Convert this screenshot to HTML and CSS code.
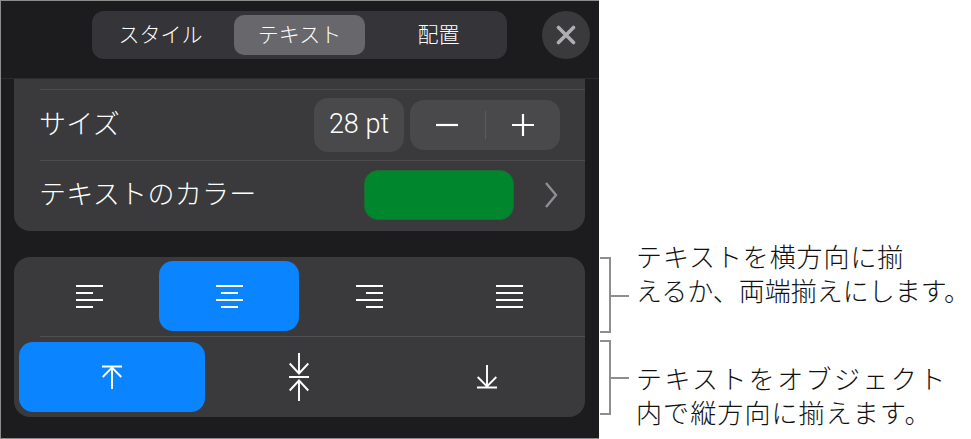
FILE: index.html
```html
<!DOCTYPE html>
<html lang="ja">
<head>
  <meta charset="UTF-8">
  <title>テキストの配置</title>
  <link rel="stylesheet" href="styles.css">
</head>
<body>

  <div class="panel">
    <div class="header">
      <div class="tabs">
        <div class="tab tab-style">スタイル</div>
        <div class="tab tab-active">テキスト</div>
        <div class="tab tab-layout">配置</div>
      </div>
      <div class="close">
        <svg width="20" height="20" viewBox="0 0 20 20"><path d="M2.500 2.500 17.500 17.500M17.500 2.500 2.500 17.500" stroke="#aeaeb2" stroke-width="3.600" stroke-linecap="round"/></svg>
      </div>
    </div>

    <div class="card card-top">
      <div class="row row-size">
        <span class="label">サイズ</span>
        <div class="value">28 pt</div>
        <div class="stepper">
          <div class="step step-minus"><svg width="22" height="4" viewBox="0 0 22 4"><path d="M0 2H22" stroke="#fff" stroke-width="2.200"/></svg></div>
          <div class="step"><svg width="22" height="22" viewBox="0 0 22 22"><path d="M0 11H22M11 0V22" stroke="#fff" stroke-width="2.200"/></svg></div>
        </div>
      </div>
      <div class="row row-color">
        <span class="label">テキストのカラー</span>
        <div class="swatch"></div>
        <svg class="chevron" width="14" height="28" viewBox="0 0 14 28"><path d="M2 2 12 14 2 26" fill="none" stroke="#8e8e93" stroke-width="2.400"/></svg>
      </div>
    </div>

    <div class="card card-align">
      <div class="align-row">
        <div class="align-btn">
          <svg width="27" height="24" viewBox="0 0 27 24"><path d="M0 2H27M0 9H17M0 16H27M0 23H17" stroke="#fff" stroke-width="1.800"/></svg>
        </div>
        <div class="align-btn is-on">
          <svg width="27" height="24" viewBox="0 0 27 24"><path d="M0 2H27M5 9H22M0 16H27M5 23H22" stroke="#fff" stroke-width="1.800"/></svg>
        </div>
        <div class="align-btn">
          <svg width="27" height="24" viewBox="0 0 27 24"><path d="M0 2H27M10 9H27M0 16H27M10 23H27" stroke="#fff" stroke-width="1.800"/></svg>
        </div>
        <div class="align-btn">
          <svg width="27" height="24" viewBox="0 0 27 24"><path d="M0 2H27M0 9H27M0 16H27M0 23H27" stroke="#fff" stroke-width="1.800"/></svg>
        </div>
      </div>
      <div class="valign-row">
        <div class="valign-btn is-on">
          <svg width="20" height="24" viewBox="0 0 20 24"><path d="M0 1.500H20M10 2V24M0.700 12 10 2.500 19.300 12" fill="none" stroke="#fff" stroke-width="1.900"/></svg>
        </div>
        <div class="valign-btn">
          <svg width="20" height="48" viewBox="0 0 20 48"><path d="M0 24H20M10 0V21M0.700 10.500 10 20.500 19.300 10.500M10 48V27M0.700 37.500 10 27.500 19.300 37.500" fill="none" stroke="#fff" stroke-width="1.900"/></svg>
        </div>
        <div class="valign-btn">
          <svg width="20" height="24" viewBox="0 0 20 24"><path d="M0 22.500H20M10 0V22M0.700 12 10 21.500 19.300 12" fill="none" stroke="#fff" stroke-width="1.900"/></svg>
        </div>
      </div>
    </div>
  </div>

  <div class="notes">
    <div class="note note-first">
      <div class="bracket"></div>
      <p><span class="line-a">テキストを横方向に揃</span><br><span class="line-b">えるか、両端揃えにします。</span></p>
    </div>
    <div class="note note-second">
      <div class="bracket"></div>
      <p><span class="line-c">テキストをオブジェクト</span><br><span class="line-d">内で縦方向に揃えます。</span></p>
    </div>
  </div>

</body>
</html>
```

FILE: styles.css
```css
* {
  margin: 0;
  padding: 0;
  box-sizing: border-box;
  font-family: "Noto Sans CJK JP", "Noto Sans", sans-serif;
  font-weight: 300;
}

body {
  background: white;
  width: 971px;
  height: 439px;
  overflow: hidden;
  display: flex;
}

.panel {
  width: 599px;
  height: 439px;
  background: #1c1c1e;
  border: 1px solid #8c8c8c;
  border-right: none;
  padding: 0 14px 0 13px;
  display: flex;
  flex-direction: column;
}

.header {
  height: 78px;
  margin: 0 -14px 0 -13px;
  padding: 10px 8px 0 91px;
  border-bottom: 1px solid #2c2c2e;
  display: flex;
  gap: 35px;
}

.tabs {
  width: 415px;
  height: 48px;
  background: #343439;
  border-radius: 12px;
  padding: 4px 0 4px 142px;
  display: flex;
  align-items: center;
  position: relative;
}

.tab {
  color: white;
  font-size: 21px;
  height: 40px;
  line-height: 36px;
  text-align: center;
  flex-shrink: 0;
}

.tab-style {
  position: absolute;
  left: 0;
  width: 137px;
}

.tab-active {
  width: 131px;
  background: #67676c;
  border-radius: 10px;
}

.tab-layout {
  width: 142px;
  padding-left: 5px;
}

.close {
  width: 48px;
  height: 48px;
  border-radius: 50%;
  background: #3a3a3c;
  display: flex;
  align-items: center;
  justify-content: center;
}

.card {
  background: #3a3a3c;
  border-radius: 0 0 16px 16px;
}

.card-top {
  height: 152px;
  padding: 10px 0 0 26px;
}

.row {
  border-top: 1.500px solid #4c4c4e;
  display: flex;
  align-items: center;
  color: white;
}

.label {
  font-size: 27px;
  letter-spacing: 0.300px;
  color: white;
  flex: 1;
  padding-bottom: 5px;
  margin-left: -1px;
}

.row-size {
  height: 71px;
  padding-right: 25px;
}

.row-color {
  height: 69px;
  padding-right: 27px;
}

.value {
  width: 90px;
  height: 54px;
  background: #49494c;
  border-radius: 14px;
  color: white;
  font-size: 27px;
  font-family: "Roboto", "Liberation Sans", sans-serif;
  line-height: 53px;
  text-align: center;
  margin-right: 6px;
}

.stepper {
  width: 150px;
  height: 50px;
  background: #49494c;
  border-radius: 14px;
  display: flex;
  align-items: center;
  position: relative;
}

.stepper .step {
  flex: 1;
  height: 28px;
  display: flex;
  align-items: center;
  justify-content: center;
}

.step-minus {
  border-right: 1px solid #5c5c5e;
}

.swatch {
  width: 150px;
  height: 50px;
  background: #00872d;
  border: 1px solid #1c6b36;
  border-radius: 14px;
  margin-right: 30px;
}

.chevron {
  display: block;
}

.card-align {
  height: 160px;
  margin-top: 26px;
  border-radius: 16px;
  padding: 4px 0 5px;
  display: flex;
  flex-direction: column;
}

.align-row {
  height: 75px;
  padding-left: 5px;
  display: grid;
  grid-template-columns: 140px 140px 140px 140px;
}

.align-btn {
  height: 70px;
  border-radius: 14px;
  display: flex;
  align-items: center;
  justify-content: center;
}

.valign-row {
  border-top: 1px solid #505052;
  margin-left: 26px;
  flex: 1;
  display: flex;
  padding-top: 5px;
}

.valign-btn {
  height: 70px;
  border-radius: 14px;
  width: 188px;
  display: flex;
  align-items: center;
  justify-content: center;
}

.align-btn.is-on,
.valign-btn.is-on {
  background: #0a84ff;
}

.valign-row .valign-btn:first-child {
  width: 186px;
  margin-left: -21px;
}

.notes {
  width: 372px;
  display: flex;
  flex-direction: column;
  padding-top: 257px;
}

.note {
  display: flex;
  height: 76px;
  position: relative;
  padding-left: 37px;
}

.note-second {
  height: 75px;
  margin-top: 7px;
}

.bracket {
  position: absolute;
  left: 1px;
  top: 0;
  width: 11px;
  height: 100%;
  border: 2px solid #8e8e8e;
  border-left: none;
}

.bracket::after {
  content: "";
  position: absolute;
  left: 9px;
  top: 36px;
  width: 20px;
  height: 2px;
  background: #8e8e8e;
}

.note-second .bracket::after {
  top: 35px;
}

.note p {
  font-size: 26px;
  line-height: 34px;
  color: #111;
  white-space: nowrap;
  margin-top: -18px;
}

.note-second p {
  margin-top: 21px;
}

.line-a {
  letter-spacing: 0.900px;
}

.line-c {
  letter-spacing: 2.400px;
}

.line-d {
  letter-spacing: 1.100px;
}
```
